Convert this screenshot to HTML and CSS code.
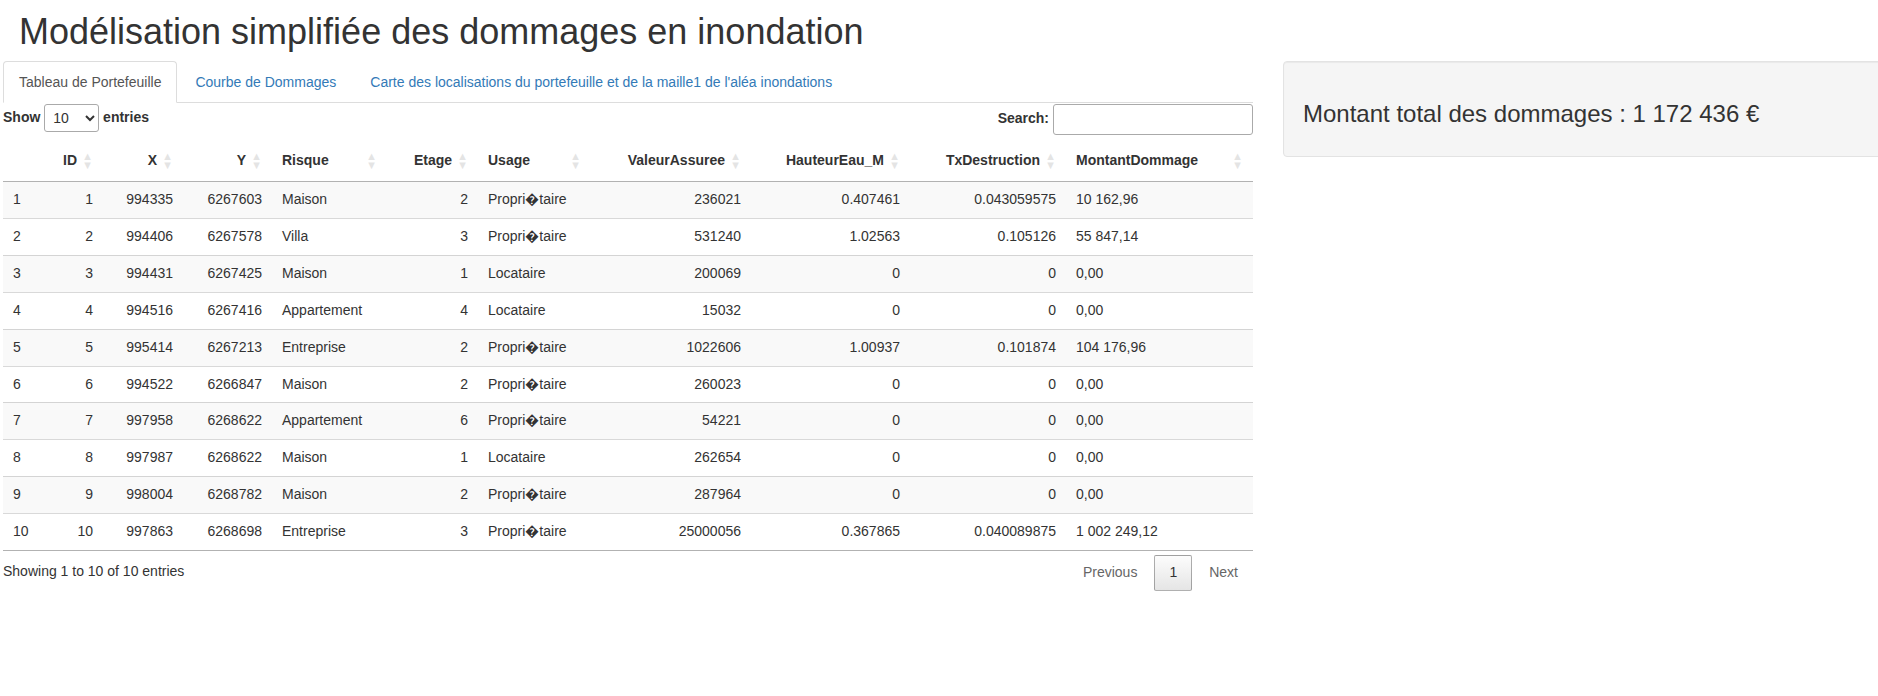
FILE: index.html
```html
<!DOCTYPE html>
<html lang="fr">
<head>
<meta charset="utf-8">
<title>Modélisation simplifiée des dommages en inondation</title>
<link rel="stylesheet" href="styles.css">
</head>
<body>
<h1 class="title">Modélisation simplifiée des dommages en inondation</h1>
<div class="main">
  <div class="left">
    <ul class="nav-tabs">
      <li class="active"><a>Tableau de Portefeuille</a></li>
      <li><a>Courbe de Dommages</a></li>
      <li><a>Carte des localisations du portefeuille et de la maille1 de l'aléa inondations</a></li>
    </ul>
    <div class="tab-content">
      <div class="dt-top">
        <label class="dt-length">Show <select class="len-select"><option>10</option><option>25</option><option>50</option><option>100</option></select> entries</label>
        <label class="dt-filter">Search:<input class="search-input" type="search"></label>
      </div>
      <table class="dt">
        <colgroup>
          <col class="w-rn"><col class="w-id"><col class="w-x"><col class="w-y"><col class="w-risque"><col class="w-etage"><col class="w-usage"><col class="w-valeur"><col class="w-hauteur"><col class="w-tx"><col class="w-montant">
        </colgroup>
        <thead>
          <tr>
            <th></th>
            <th class="sorting r">ID</th>
            <th class="sorting r">X</th>
            <th class="sorting r">Y</th>
            <th class="sorting">Risque</th>
            <th class="sorting r">Etage</th>
            <th class="sorting">Usage</th>
            <th class="sorting r">ValeurAssuree</th>
            <th class="sorting r">HauteurEau_M</th>
            <th class="sorting r">TxDestruction</th>
            <th class="sorting">MontantDommage</th>
          </tr>
        </thead>
        <tbody>
          <tr class="odd"><td>1</td><td class="r">1</td><td class="r">994335</td><td class="r">6267603</td><td>Maison</td><td class="r">2</td><td>Propri&#xFFFD;taire</td><td class="r">236021</td><td class="r">0.407461</td><td class="r">0.043059575</td><td>10 162,96</td></tr>
          <tr><td>2</td><td class="r">2</td><td class="r">994406</td><td class="r">6267578</td><td>Villa</td><td class="r">3</td><td>Propri&#xFFFD;taire</td><td class="r">531240</td><td class="r">1.02563</td><td class="r">0.105126</td><td>55 847,14</td></tr>
          <tr class="odd"><td>3</td><td class="r">3</td><td class="r">994431</td><td class="r">6267425</td><td>Maison</td><td class="r">1</td><td>Locataire</td><td class="r">200069</td><td class="r">0</td><td class="r">0</td><td>0,00</td></tr>
          <tr><td>4</td><td class="r">4</td><td class="r">994516</td><td class="r">6267416</td><td>Appartement</td><td class="r">4</td><td>Locataire</td><td class="r">15032</td><td class="r">0</td><td class="r">0</td><td>0,00</td></tr>
          <tr class="odd"><td>5</td><td class="r">5</td><td class="r">995414</td><td class="r">6267213</td><td>Entreprise</td><td class="r">2</td><td>Propri&#xFFFD;taire</td><td class="r">1022606</td><td class="r">1.00937</td><td class="r">0.101874</td><td>104 176,96</td></tr>
          <tr><td>6</td><td class="r">6</td><td class="r">994522</td><td class="r">6266847</td><td>Maison</td><td class="r">2</td><td>Propri&#xFFFD;taire</td><td class="r">260023</td><td class="r">0</td><td class="r">0</td><td>0,00</td></tr>
          <tr class="odd"><td>7</td><td class="r">7</td><td class="r">997958</td><td class="r">6268622</td><td>Appartement</td><td class="r">6</td><td>Propri&#xFFFD;taire</td><td class="r">54221</td><td class="r">0</td><td class="r">0</td><td>0,00</td></tr>
          <tr><td>8</td><td class="r">8</td><td class="r">997987</td><td class="r">6268622</td><td>Maison</td><td class="r">1</td><td>Locataire</td><td class="r">262654</td><td class="r">0</td><td class="r">0</td><td>0,00</td></tr>
          <tr class="odd"><td>9</td><td class="r">9</td><td class="r">998004</td><td class="r">6268782</td><td>Maison</td><td class="r">2</td><td>Propri&#xFFFD;taire</td><td class="r">287964</td><td class="r">0</td><td class="r">0</td><td>0,00</td></tr>
          <tr><td>10</td><td class="r">10</td><td class="r">997863</td><td class="r">6268698</td><td>Entreprise</td><td class="r">3</td><td>Propri&#xFFFD;taire</td><td class="r">25000056</td><td class="r">0.367865</td><td class="r">0.040089875</td><td>1 002 249,12</td></tr>
        </tbody>
      </table>
      <div class="dt-bottom">
        <div class="dt-info">Showing 1 to 10 of 10 entries</div>
        <div class="dt-paginate">
          <a class="pg-btn disabled">Previous</a>
          <a class="pg-btn current">1</a>
          <a class="pg-btn disabled">Next</a>
        </div>
      </div>
    </div>
  </div>
  <div class="right">
    <div class="well">
      <h3 class="total">Montant total des dommages : 1 172 436 €</h3>
    </div>
  </div>
</div>
</body>
</html>
```
FILE: styles.css
```css
* { box-sizing: border-box; }
html, body { margin: 0; padding: 0; background: #fff; }
body {
  font-family: "Liberation Sans", Arial, Helvetica, sans-serif;
  font-size: 14px;
  line-height: 1.42857;
  color: #333;
}
.title {
  font-size: 36px;
  font-weight: 500;
  line-height: 1.1;
  margin: 12px 0 9px 0;
  padding-left: 19px;
  color: #333;
}
.main {
  display: flex;
  gap: 30px;
  padding-left: 3px;
  overflow: hidden;
}
.left { width: 1250px; flex-shrink: 0; }
.right { width: 610px; flex-shrink: 0; }

/* tabs */
.nav-tabs {
  list-style: none;
  margin: 0;
  padding: 0;
  display: flex;
  border-bottom: 1px solid #ddd;
}
.nav-tabs li { margin-bottom: -1px; margin-right: 2px; }
.nav-tabs a {
  display: block;
  padding: 10px 15px;
  line-height: 20px;
  border: 1px solid transparent;
  border-radius: 4px 4px 0 0;
  color: #337ab7;
  cursor: pointer;
}
.nav-tabs li.active a {
  color: #555;
  background: #fff;
  border-color: #ddd #ddd transparent;
}

/* datatable top */
.dt-top {
  display: flex;
  justify-content: space-between;
  align-items: flex-start;
  padding-top: 1px;
  margin-bottom: 6px;
}
.dt-length, .dt-filter {
  font-weight: bold;
  display: flex;
  align-items: center;
  white-space: pre;
}
.len-select {
  width: 55px;
  height: 28px;
  border: 1px solid #aaa;
  border-radius: 3px;
  padding: 4px;
  font: inherit;
  font-weight: normal;
  color: #333;
  background: #fff;
}
.search-input {
  margin-left: 4px;
  width: 200px;
  height: 31px;
  border: 1px solid #aaa;
  border-radius: 3px;
  padding: 5px;
  font: inherit;
  font-weight: normal;
  background: transparent;
}

/* table */
.dt {
  width: 1250px;
  table-layout: fixed;
  border-collapse: separate;
  border-spacing: 0;
  border-bottom: 1px solid rgba(0,0,0,0.3);
}
.w-rn { width: 40px; }
.w-id { width: 60px; }
.w-x { width: 80px; }
.w-y { width: 89px; }
.w-risque { width: 115px; }
.w-etage { width: 91px; }
.w-usage { width: 113px; }
.w-valeur { width: 160px; }
.w-hauteur { width: 159px; }
.w-tx { width: 156px; }
.w-montant { width: 187px; }

.dt th {
  text-align: left;
  font-weight: bold;
  padding: 10px;
  border-bottom: 1px solid rgba(0,0,0,0.3);
  position: relative;
  white-space: nowrap;
}
.dt th.sorting { padding-right: 26px; }
.dt th.sorting::before,
.dt th.sorting::after {
  position: absolute;
  display: block;
  opacity: 0.125;
  right: 10px;
  line-height: 9px;
  font-size: 0.8em;
  font-weight: normal;
}
.dt th.sorting::before { bottom: 50%; content: "\25B2"; }
.dt th.sorting::after { top: 50%; content: "\25BC"; }
.dt td {
  padding: 8px 10px;
  border-top: 1px solid rgba(0,0,0,0.15);
  white-space: nowrap;
}
.dt tbody tr:first-child td { border-top: none; }
.dt tr.odd td { background: #f9f9f9; }
.dt .r { text-align: right; }

/* bottom */
.dt-bottom {
  display: flex;
  justify-content: space-between;
  align-items: flex-start;
}
.dt-info { padding-top: 10.57px; }
.dt-paginate { padding-top: 3.5px; display: flex; }
.pg-btn {
  display: inline-block;
  min-width: 1.5em;
  padding: 7px 14px;
  margin-left: 2px;
  text-align: center;
  border: 1px solid transparent;
  border-radius: 2px;
  color: #333;
  cursor: default;
}
.pg-btn.disabled { color: #666; }
.pg-btn.current {
  color: #333;
  border: 1px solid rgba(0,0,0,0.3);
  background: linear-gradient(to bottom, rgba(230,230,230,0.1) 0%, rgba(0,0,0,0.1) 100%);
}

/* well */
.well {
  min-height: 20px;
  padding: 19px;
  margin-bottom: 20px;
  background: #f5f5f5;
  border: 1px solid #e3e3e3;
  border-radius: 4px;
  box-shadow: inset 0 1px 1px rgba(0,0,0,0.05);
}
.total {
  font-size: 24px;
  font-weight: 500;
  line-height: 1.1;
  margin: 20px 0 10px;
}
```
